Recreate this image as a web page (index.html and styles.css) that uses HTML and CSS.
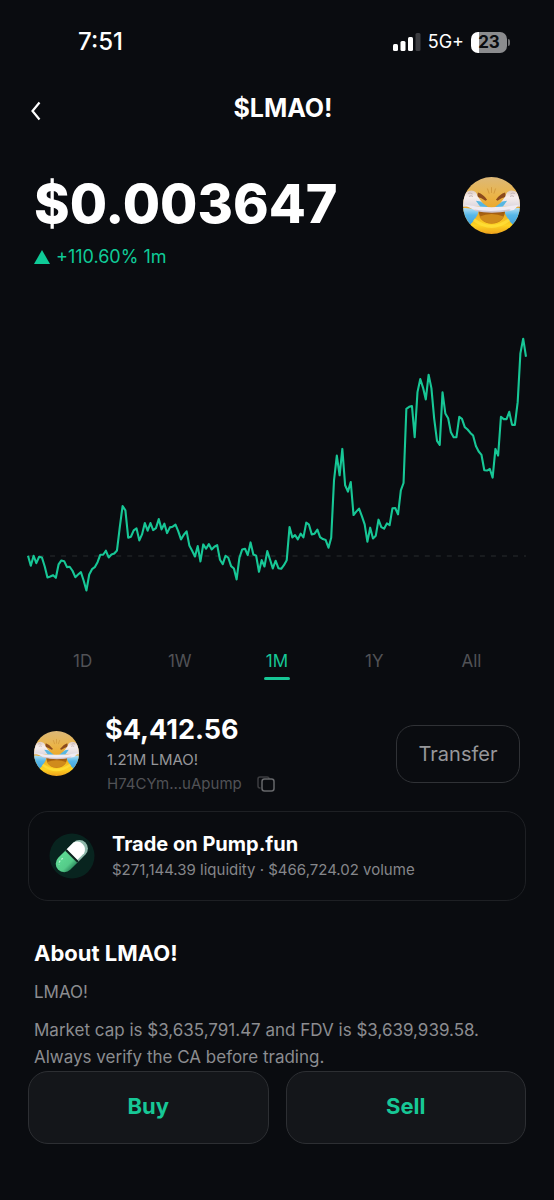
FILE: index.html
```html
<!DOCTYPE html>
<html lang="en">
<head>
<meta charset="utf-8">
<meta name="viewport" content="width=device-width, initial-scale=1">
<title>$LMAO!</title>
<link rel="stylesheet" href="styles.css">
</head>
<body>
<svg class="defs" width="0" height="0" aria-hidden="true">
  <defs>
    <linearGradient id="skin" x1="0" y1="0" x2="0" y2="1"><stop offset="0" stop-color="#dcb878"/><stop offset=".3" stop-color="#eab54c"/><stop offset=".6" stop-color="#eba623"/><stop offset=".85" stop-color="#fdd322"/><stop offset="1" stop-color="#eda01c"/></linearGradient>
    <linearGradient id="fist" x1="0" y1="0" x2="0" y2="1"><stop offset="0" stop-color="#dccbc3"/><stop offset=".4" stop-color="#f8efed"/><stop offset="1" stop-color="#ddd7de"/></linearGradient>
    <linearGradient id="tear" x1="0" y1="0" x2="0" y2="1"><stop offset="0" stop-color="#b5e0f4"/><stop offset=".4" stop-color="#57b8e8"/><stop offset="1" stop-color="#419fda"/></linearGradient>
    <linearGradient id="mouth" x1="0" y1="0" x2="0" y2="1"><stop offset="0" stop-color="#9a560f"/><stop offset="1" stop-color="#cc8118"/></linearGradient>
    <linearGradient id="capsule" x1="0" y1="0" x2="1" y2="0"><stop offset="0" stop-color="#5dda94"/><stop offset=".7" stop-color="#55cb89"/><stop offset="1" stop-color="#319263"/></linearGradient>
    <clipPath id="face"><circle cx="84" cy="84" r="84"/></clipPath>
  </defs>
  <symbol id="lmao" viewBox="0 0 168 168">
    <g clip-path="url(#face)">
      <rect width="168" height="168" fill="url(#skin)"/>
      <path d="M72 34l5 15M84 30v17M96 34l-5 15" stroke="#c98d33" stroke-width="2" fill="none"/>
      <path d="M44 46Q60 51 71 67L66 70Q52 60 41 60Z" fill="#8b4a1d"/>
      <path d="M124 46Q108 51 97 67L102 70Q116 60 127 60Z" fill="#8b4a1d"/>
      <path d="M-4 92Q20 88 47 101Q40 122 18 144L-4 144Z" fill="url(#tear)"/>
      <path d="M172 92Q148 88 121 101Q128 122 150 144L172 144Z" fill="url(#tear)"/>
      <path d="M46 100H124Q121 136 84 138Q49 136 46 100Z" fill="url(#mouth)"/>
      <path d="M48 117Q84 101 121 117Q109 135 84 136Q58 135 48 117Z" fill="#d08b1c"/>
      <path d="M-2 70Q0 42 25 40Q40 41 43 57L60 80Q56 88 38 87L-2 88Z" fill="url(#fist)"/>
      <path d="M170 70Q168 42 143 40Q128 41 125 57L108 80Q112 88 130 87L170 88Z" fill="url(#fist)"/>
      <path d="M15 49q8-5 13 2M18 58q6-5 11 0M153 49q-8-5-13 2M150 58q-6-5-11 0" stroke="#c5b5b7" stroke-width="3" fill="none"/>
      <path d="M38 70L52 72L75 90L52 89Z" fill="#56b6e1"/>
      <path d="M130 70L116 72L93 90L116 89Z" fill="#56b6e1"/>
      <path d="M3 82Q84 96 165 82L150 97Q84 110 33 97Z" fill="#f0ebf2"/>
      <path d="M33 96Q84 105 140 95L137 100Q84 110 36 100Z" fill="#cfc6d1"/>
      <path d="M32 126Q84 165 136 126" stroke="#ffe13c" stroke-width="9" fill="none" opacity=".7"/>
    </g>
  </symbol>
</svg>

<div class="screen">
  <div class="status">
    <time class="clock">7:51</time>
    <div class="indicators">
      <svg width="28" height="20" viewBox="0 0 28 20" aria-hidden="true"><g fill="#fff"><rect y="12" width="5" height="7" rx="1.5"/><rect x="7.5" y="9" width="5" height="10" rx="1.5"/><rect x="15" y="5" width="5" height="14" rx="1.5"/></g><rect x="22.5" y="1" width="5" height="18" rx="1.5" fill="#3b3c40"/></svg>
      <span class="network">5G+</span>
      <span class="battery">23</span>
    </div>
  </div>

  <header class="topbar">
    <button class="back" aria-label="Back"><svg width="12" height="20" viewBox="0 0 12 20" fill="none" stroke="#fff" stroke-width="2.2"><path d="M10.5 1.5L3.500 10l7 8.500"/></svg></button>
    <h1 class="title">$LMAO!</h1>
  </header>

  <main>
    <section class="quote">
      <div>
        <div class="price">$0.003647</div>
        <div class="change"><svg width="16" height="14" viewBox="0 0 16 14" aria-hidden="true"><path d="M8 0L16 14H0Z" fill="#0fcb98"/></svg>+110.60% 1m</div>
      </div>
      <svg class="coin coin-large" role="img" aria-label="LMAO!"><use href="#lmao"/></svg>
    </section>

    <svg class="chart" viewBox="0 0 497 260" role="img" aria-label="Price over one month">
      <path d="M0 220.500H497" stroke="#292c2f" stroke-dasharray="5 6"/>
      <polyline id="series" fill="none" stroke="#17c796" stroke-width="2.100" stroke-linejoin="round"/>
    </svg>

    <nav class="ranges" aria-label="Chart range">
      <button class="range">1D</button>
      <button class="range">1W</button>
      <button class="range active" aria-pressed="true">1M</button>
      <button class="range">1Y</button>
      <button class="range">All</button>
    </nav>

    <section class="holding">
      <svg class="coin coin-small" aria-hidden="true"><use href="#lmao"/></svg>
      <div class="holding-info">
        <div class="balance">$4,412.56</div>
        <div class="amount">1.21M LMAO!</div>
        <div class="address">H74CYm...uApump
          <button class="copy" aria-label="Copy address"><svg width="18" height="16" viewBox="0 0 18 16" fill="none" stroke-width="1.500"><path d="M3.500 12H3a2 2 0 0 1-2-2V3a2 2 0 0 1 2-2h7a2 2 0 0 1 2 2" stroke="#3c3d40"/><rect x="5" y="3" width="12" height="12" rx="2.500" stroke="#66676a"/></svg></button>
        </div>
      </div>
      <button class="transfer">Transfer</button>
    </section>

    <a class="venue" href="#trade">
      <svg class="pill" width="46" height="46" viewBox="0 0 46 46" aria-hidden="true">
        <circle cx="23" cy="23" r="22.500" fill="#08241f"/>
        <g transform="rotate(45 23 23)">
          <path d="M14.500 24V12.500a8.500 8.500 0 0 1 17 0V24Z" fill="#8fb9ab"/>
          <path d="M14.500 22V12.500a8 8.500 0 0 1 15 0V22Z" fill="#fff"/>
          <path d="M14.500 24h17v10a8.500 8.500 0 0 1-17 0Z" fill="url(#capsule)"/>
          <path d="M14.500 23h17" stroke="#0b221d" stroke-width="2"/>
          <path d="M18 31v3q0 3 2 4" stroke="#b8f5d1" stroke-width="1.200" stroke-dasharray="2 1.500" fill="none"/>
        </g>
      </svg>
      <span class="venue-text">
        <strong class="venue-name">Trade on Pump.fun</strong>
        <span class="venue-stats">$271,144.39 liquidity · $466,724.02 volume</span>
      </span>
    </a>

    <section class="about">
      <h2 class="about-title">About LMAO!</h2>
      <p>LMAO!</p>
      <p>Market cap is $3,635,791.47 and FDV is $3,639,939.58. Always verify the CA before trading.</p>
    </section>
  </main>

  <footer class="actions">
    <button class="action">Buy</button>
    <button class="action">Sell</button>
  </footer>
</div>
<script src="chart.js"></script>
</body>
</html>
```
FILE: styles.css
```css
* { box-sizing: border-box; }
body { margin: 0; background: #0a0c10; color: #fff; font-family: Inter, "Liberation Sans", sans-serif; }
button { margin: 0; padding: 0; border: 0; background: none; color: inherit; font: inherit; cursor: pointer; }
svg { display: block; flex: none; }
h1, h2, p { margin: 0; }
.defs { position: absolute; }
.screen { min-height: 100vh; padding: 28px 28px 56px; }

.status { display: flex; justify-content: space-between; align-items: center; height: 28px; padding: 0 17px 0 50px; }
.clock { font-size: 24px; font-weight: 500; line-height: 28px; }
.indicators { display: flex; align-items: center; gap: 7px; }
.network { font-size: 18px; line-height: 28px; }
.battery { position: relative; width: 36px; height: 21px; margin-right: 2px; border-radius: 7px; background: linear-gradient(90deg, #fff 8px, #8b8c8e 8px); color: #0a0c10; font-size: 17px; font-weight: 700; line-height: 21px; text-align: center; }
.battery::after { content: ""; position: absolute; right: -3px; top: 7px; width: 2px; height: 7px; border-radius: 0 2px 2px 0; background: #6f7072; }

.topbar { display: grid; grid-template-columns: 24px 1fr 12px; align-items: center; height: 40px; margin-top: 32px; }
.back { display: flex; justify-content: flex-start; padding: 6px 1px 0; }
.title { font-size: 25px; font-weight: 700; line-height: 32px; text-align: center; }

.quote { display: flex; justify-content: space-between; align-items: flex-start; margin-top: 40px; padding: 0 6px; }
.price { margin-top: 8px; font-size: 54px; font-weight: 800; line-height: 56px; }
.change { display: flex; align-items: center; gap: 6px; margin-top: 13px; color: #0fcb98; font-size: 18px; line-height: 24px; }
.coin-large { width: 57px; height: 57px; margin-top: 9px; }
.coin-small { width: 45px; height: 45px; }

.chart { width: 100%; height: auto; margin-top: 66px; overflow: visible; }

.ranges { display: grid; grid-template-columns: repeat(5, 1fr); margin-top: 54px; padding: 0 6px; }
.range { display: flex; flex-direction: column; align-items: center; gap: 5px; color: #515256; font-size: 17px; line-height: 22px; }
.range::after { content: ""; width: 26px; height: 3px; border-radius: 2px; }
.active { color: #17c796; }
.active::after { background: #17c796; }

.holding { display: flex; align-items: center; margin-top: 32px; padding: 0 6px; }
.holding-info { flex: 1; margin-left: 26px; }
.balance { font-size: 27px; font-weight: 700; line-height: 36px; }
.amount { padding-left: 2px; color: #96979a; font-size: 15px; line-height: 24px; }
.address { display: flex; align-items: center; gap: 15px; padding-left: 2px; color: #515256; font-size: 15px; line-height: 24px; }
.transfer { width: 124px; height: 58px; border: 1px solid #303236; border-radius: 18px; color: #96979a; font-size: 20px; }

.venue { display: flex; align-items: center; gap: 17px; min-height: 90px; margin-top: 15px; padding: 0 20px; border: 1px solid #1e2024; border-radius: 20px; color: inherit; text-decoration: none; }
.venue-text { display: flex; flex-direction: column; }
.venue-name { font-size: 20px; font-weight: 700; line-height: 28px; }
.venue-stats { color: #85868a; font-size: 15px; line-height: 24px; }

.about { padding: 0 6px; margin-top: 38px; }
.about-title { margin-bottom: 12px; font-size: 22px; font-weight: 700; line-height: 28px; }
.about p { color: #8c8d90; font-size: 17px; line-height: 27px; }
.about p + p { margin-top: 11px; }

.actions { display: grid; grid-template-columns: 1fr 1fr; gap: 17px; }
.action { height: 73px; padding-bottom: 2px; border: 1px solid #2d2f33; border-radius: 20px; background: #14161a; color: #17c796; font-size: 22px; font-weight: 700; }
```
FILE: chart.js
```js
// Sampled price levels, in thirds of a chart unit from the top of the plot (offset by 435).
const levels = [
  226,256,226,248,229,231,258,291,288,284,292,252,240,242,260,259,271,290,282,275,
  300,330,282,266,260,245,223,223,211,231,222,219,210,140,77,90,172,169,150,144,
  180,162,128,151,128,149,143,116,147,130,158,141,139,133,152,177,163,153,195,211,
  228,197,243,192,205,191,207,199,194,238,251,226,232,257,264,297,232,207,205,224,
  186,222,226,274,239,258,212,238,264,241,263,265,254,239,140,171,164,177,160,171,
  127,133,162,160,148,170,176,179,202,172,0,-74,-15,-94,15,34,5,104,94,85,
  107,132,184,142,174,166,118,140,145,129,134,84,83,102,30,8,-214,-220,-222,-129,
  -264,-303,-277,-242,-316,-276,-184,-118,-106,-263,-200,-186,-144,-129,-129,-190,-184,-159,-152,-142,
  -134,-103,-86,-76,-30,-29,-34,-8,-94,-74,-190,-183,-183,-205,-166,-166,-234,-380,-424,-370
];
const step = 497 / (levels.length - 1);
document.getElementById("series").setAttribute(
  "points",
  levels.map((v, i) => `${(i * step).toFixed(1)},${((v + 435) / 3).toFixed(1)}`).join(" ")
);
```
